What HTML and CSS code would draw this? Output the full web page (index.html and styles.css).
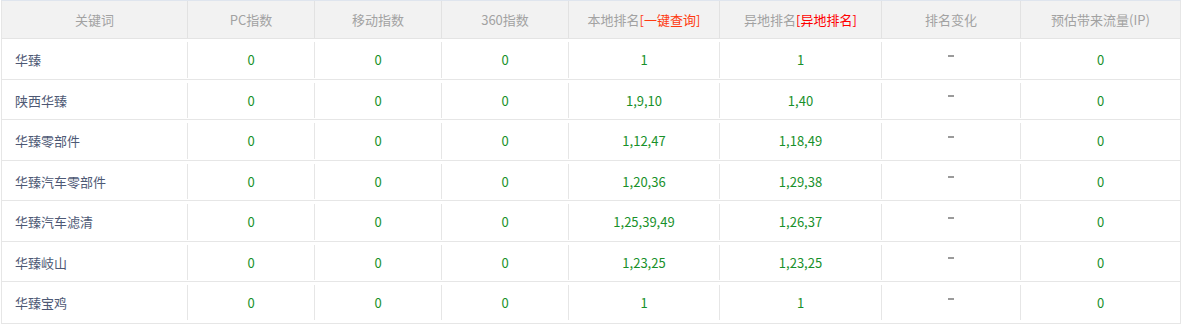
FILE: index.html
```html
<!DOCTYPE html>
<html lang="zh-CN">
<head>
<meta charset="utf-8">
<title>关键词排名</title>
<link rel="stylesheet" href="styles.css">
</head>
<body>
<div class="table">
  <div class="row head">
    <div class="cell">关键词</div>
    <div class="cell">PC指数</div>
    <div class="cell">移动指数</div>
    <div class="cell">360指数</div>
    <div class="cell">本地排名<span class="link orange">[一键查询]</span></div>
    <div class="cell">异地排名<span class="link red">[异地排名]</span></div>
    <div class="cell">排名变化</div>
    <div class="cell">预估带来流量(IP)</div>
  </div>
  <div class="row">
    <div class="cell kw">华臻</div>
    <div class="cell num">0</div><div class="cell num">0</div><div class="cell num">0</div>
    <div class="cell num">1</div><div class="cell num">1</div>
    <div class="cell"><span class="dash"></span></div>
    <div class="cell num">0</div>
  </div>
  <div class="row">
    <div class="cell kw">陕西华臻</div>
    <div class="cell num">0</div><div class="cell num">0</div><div class="cell num">0</div>
    <div class="cell num">1,9,10</div><div class="cell num">1,40</div>
    <div class="cell"><span class="dash"></span></div>
    <div class="cell num">0</div>
  </div>
  <div class="row">
    <div class="cell kw">华臻零部件</div>
    <div class="cell num">0</div><div class="cell num">0</div><div class="cell num">0</div>
    <div class="cell num">1,12,47</div><div class="cell num">1,18,49</div>
    <div class="cell"><span class="dash"></span></div>
    <div class="cell num">0</div>
  </div>
  <div class="row">
    <div class="cell kw">华臻汽车零部件</div>
    <div class="cell num">0</div><div class="cell num">0</div><div class="cell num">0</div>
    <div class="cell num">1,20,36</div><div class="cell num">1,29,38</div>
    <div class="cell"><span class="dash"></span></div>
    <div class="cell num">0</div>
  </div>
  <div class="row">
    <div class="cell kw">华臻汽车滤清</div>
    <div class="cell num">0</div><div class="cell num">0</div><div class="cell num">0</div>
    <div class="cell num">1,25,39,49</div><div class="cell num">1,26,37</div>
    <div class="cell"><span class="dash"></span></div>
    <div class="cell num">0</div>
  </div>
  <div class="row">
    <div class="cell kw">华臻岐山</div>
    <div class="cell num">0</div><div class="cell num">0</div><div class="cell num">0</div>
    <div class="cell num">1,23,25</div><div class="cell num">1,23,25</div>
    <div class="cell"><span class="dash"></span></div>
    <div class="cell num">0</div>
  </div>
  <div class="row">
    <div class="cell kw">华臻宝鸡</div>
    <div class="cell num">0</div><div class="cell num">0</div><div class="cell num">0</div>
    <div class="cell num">1</div><div class="cell num">1</div>
    <div class="cell"><span class="dash"></span></div>
    <div class="cell num">0</div>
  </div>
</div>
</body>
</html>
```
FILE: styles.css
```css
html, body {
  margin: 0;
  padding: 0;
  background: #ffffff;
}
body {
  font-family: "Noto Sans CJK SC", "Noto Sans", "Liberation Sans", sans-serif;
  font-size: 13px;
}
.table {
  margin-left: 1px;
  width: 1180px;
  border: 1px solid #e6e6e6;
  border-top: 1px solid #dfe5ee;
  box-sizing: border-box;
}
.row {
  display: grid;
  grid-template-columns: 185px 127px 127px 127px 151px 162px 139px 160px;
  height: 40.5px;
  box-sizing: border-box;
  border-bottom: 1px solid #e6e6e6;
  padding-top: 3px;
  padding-bottom: 1px;
}
.row:last-child {
  border-bottom: none;
  height: 41px;
  padding-bottom: 3px;
}
.row.head {
  height: 38px;
  padding: 0;
  background: #f2f2f2;
  border-bottom: 1px solid #e4e4e4;
  color: #a2a2a2;
}
.cell {
  display: flex;
  align-items: center;
  justify-content: center;
  border-left: 1px solid #e6e6e6;
  white-space: nowrap;
}
.cell:first-child {
  border-left: none;
}
.head .cell {
  border-left-color: #e2e2e2;
}
.cell.kw {
  justify-content: flex-start;
  padding-left: 13px;
  color: #4d5874;
}
.cell.num {
  color: #18902a;
}
.link.orange {
  color: #ff3a10;
}
.link.red {
  color: #ff0000;
}
.dash {
  display: block;
  width: 6px;
  height: 2px;
  background: #9a9a9a;
  margin-bottom: 8px;
}
```
